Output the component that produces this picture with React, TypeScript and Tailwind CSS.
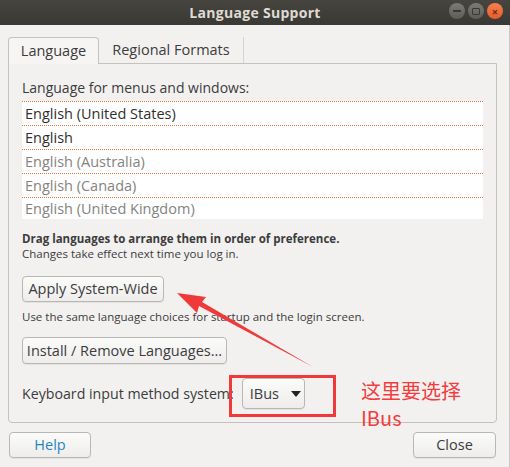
import React from "react";

const langs = [
  { name: "English (United States)", dim: false },
  { name: "English", dim: false },
  { name: "English (Australia)", dim: true },
  { name: "English (Canada)", dim: true },
  { name: "English (United Kingdom)", dim: true },
];

function Btn({ children, className = "" }: { children: React.ReactNode; className?: string }) {
  return (
    <div
      className={
        "flex items-center justify-center rounded-[4px] border border-[#b9b7b4] bg-gradient-to-b from-[#fbfbfa] to-[#eeedec] shadow-[0_1px_0_rgba(0,0,0,0.06)] " +
        className
      }
    >
      {children}
    </div>
  );
}

export default function App() {
  return (
    <div
      className="relative h-[467px] w-[510px] overflow-hidden bg-[#f2f1f0] text-[#3c3c3c]"
      style={{ fontFamily: '"Open Sans", "Noto Sans", sans-serif' }}
    >
      {/* title bar */}
      <div className="relative flex h-[25px] items-center justify-center bg-gradient-to-b from-[#46453f] to-[#393834]">
        <span className="text-[14px] font-bold tracking-[0.3px] text-[#dfdbd2]">Language Support</span>
        <div className="absolute right-[7px] top-[3px] flex gap-[3px]">
          <div className="flex h-[16px] w-[16px] items-center justify-center rounded-full bg-gradient-to-b from-[#7c7b77] to-[#5d5c58]">
            <div className="h-[2px] w-[8px] bg-[#3a3935]" />
          </div>
          <div className="flex h-[16px] w-[16px] items-center justify-center rounded-full bg-gradient-to-b from-[#7c7b77] to-[#5d5c58]">
            <div className="h-[7px] w-[8px] rounded-[1px] border-[1.5px] border-[#3a3935]" />
          </div>
          <div className="flex h-[16px] w-[16px] items-center justify-center rounded-full bg-gradient-to-b from-[#f7804f] to-[#e55b29] text-[11px] font-bold leading-none text-[#6b2a12]">
            ×
          </div>
        </div>
      </div>

      {/* tabs */}
      <div className="ml-[8px] mt-[12px] flex h-[26px] items-stretch">
        <div className="relative z-10 -mb-px flex w-[91px] items-center justify-center rounded-t-[4px] border border-b-0 border-[#c4c2bf] bg-[#f6f5f4] text-[14.5px]">
          Language
        </div>
        <div className="flex w-[145px] items-center justify-center border-r border-[#d6d4d1] text-[14.5px]">
          Regional Formats
        </div>
      </div>

      {/* panel */}
      <div className="ml-[8px] h-[360px] w-[489px] rounded-b-[4px] border border-[#c4c2bf] px-[13px] pt-[14px]">
        <div className="h-[19px] text-[14px] leading-[19px]">Language for menus and windows:</div>
        <div className="mt-[4px] w-[461px] bg-white">
          {langs.map((l, i) => (
            <div
              key={l.name}
              className={
                "flex items-center border-t border-dotted border-[#e2773f] pl-[3px] text-[14.5px] " +
                (i === 4 ? "h-[22px] " : "h-[24px] ") +
                (l.dim ? "text-[#85837f]" : "text-[#2f2f2f]")
              }
            >
              {l.name}
            </div>
          ))}
        </div>
        <div className="mt-[12px] text-[11.5px] font-bold leading-[15px]">
          Drag languages to arrange them in order of preference.
        </div>
        <div className="text-[11.5px] leading-[15px]">Changes take effect next time you log in.</div>
        <Btn className="mt-[15px] h-[26px] w-[142px] text-[14.5px]">Apply System-Wide</Btn>
        <div className="mt-[7px] text-[11.5px] leading-[15px]">
          Use the same language choices for startup and the login screen.
        </div>
        <Btn className="mt-[13px] h-[27px] w-[205px] text-[14.5px]">Install / Remove Languages...</Btn>
        <div className="mt-[14px] flex items-center">
          <span className="text-[14.2px]">Keyboard input method system:</span>
          <Btn className="ml-[8px] h-[31px] w-[63px] justify-start gap-[12px] pl-[7px] text-[14.5px]">
            IBus
            <svg width="10" height="6" viewBox="0 0 10 6">
              <path d="M0 0h10L5 6z" fill="#222" />
            </svg>
          </Btn>
        </div>
      </div>

      {/* bottom buttons */}
      <div className="mt-[9px] flex justify-between pl-[9px] pr-[14px]">
        <Btn className="h-[26px] w-[82px] text-[14.5px] text-[#1d88bf]">Help</Btn>
        <Btn className="h-[26px] w-[83px] text-[14.5px]">Close</Btn>
      </div>

      {/* right window edge */}
      <div className="absolute right-0 top-[25px] h-[442px] w-px bg-[#c9c7c4]" />

      {/* annotation */}
      <div className="absolute left-[229px] top-[375px] h-[42px] w-[107px] border-[3px] border-[#f03a3a]" />
      <svg className="absolute left-0 top-0" width="510" height="467">
        <polygon points="177,293 206,297 202,302 313,367 199,306 197,313" fill="#f03a3a" />
      </svg>
      <div
        className="absolute left-[361px] top-[378px] text-[20px] leading-[26px] text-[#f53b3b]"
        style={{ fontFamily: '"Noto Sans CJK SC", "Noto Sans", sans-serif' }}
      >
        这里要选择
      </div>
      <div
        className="absolute left-[361px] top-[405px] text-[20px] leading-[26px] text-[#f53b3b]"
        style={{ fontFamily: '"Noto Sans CJK SC", "Noto Sans", sans-serif' }}
      >
        IBus
      </div>
    </div>
  );
}
